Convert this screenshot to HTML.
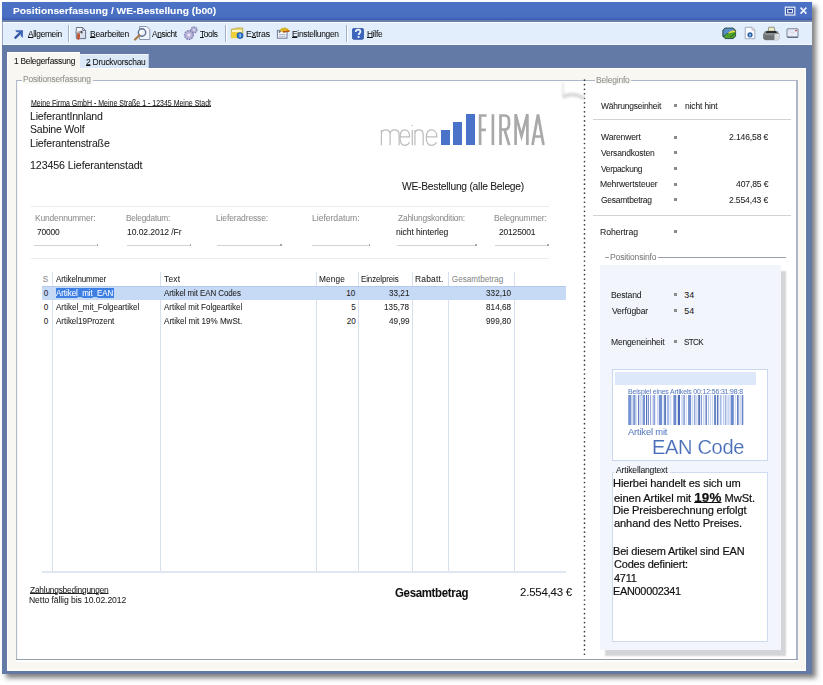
<!DOCTYPE html>
<html><head><meta charset="utf-8"><title>Positionserfassung</title>
<style>
html,body{margin:0;padding:0;}
body{width:823px;height:685px;position:relative;overflow:hidden;background:#fff;font-family:"Liberation Sans",sans-serif;}
body>div{position:absolute;}
.t{white-space:pre;transform-origin:0 0;-webkit-text-stroke:0.05px currentColor;}
u{text-decoration-thickness:1px;text-underline-offset:0px;}
</style></head><body>
<div style="left:2px;top:2px;width:810px;height:672px;background:#6379a6;box-shadow:4px 4px 5px rgba(0,0,0,0.5);"></div>
<div style="left:2px;top:2px;width:810px;height:17px;background:linear-gradient(#4b72c4,#4a6fc2 85%,#3f62b9);"></div>
<div style="left:2px;top:19px;width:810px;height:1px;background:#3d5cb0;"></div>
<div style="left:2px;top:20px;width:810px;height:2px;background:#6a80ab;"></div>
<div class="t" style="left:12.50px;top:6.00px;font-size:9.63px;line-height:9.63px;color:#fff;font-weight:700;transform:scaleX(1.0644);">Positionserfassung / WE-Bestellung (b00)</div>
<svg style="position:absolute;left:784px;top:6px" width="12" height="10" viewBox="0 0 12 10"><rect x="1.4" y="1.2" width="9.4" height="7.8" fill="#2f4c9c" stroke="#dfe7f8" stroke-width="1.3"/><rect x="3.7" y="3.4" width="4.8" height="3.4" fill="#2a4590" stroke="#dfe7f8" stroke-width="1.2"/></svg>
<svg style="position:absolute;left:799px;top:6px" width="9" height="9" viewBox="0 0 9 9"><path d="M1.6 1.6L7.4 7.6M7.4 1.6L1.6 7.6" stroke="#f0f5fd" stroke-width="1.6"/></svg>
<div style="left:2px;top:22px;width:810px;height:23px;background:#e2eefb;border-top:1px solid #fafdff;border-bottom:1px solid #f4f9ff;box-sizing:border-box;"></div>
<div style="left:2px;top:22px;width:1px;height:23px;background:#9aaac8;"></div>
<div style="left:68px;top:25px;width:1px;height:17px;background:#9fb0c8;"></div>
<div style="left:69px;top:25px;width:1px;height:17px;background:#fff;"></div>
<div style="left:225px;top:25px;width:1px;height:17px;background:#9fb0c8;"></div>
<div style="left:226px;top:25px;width:1px;height:17px;background:#fff;"></div>
<div style="left:346px;top:25px;width:1px;height:17px;background:#9fb0c8;"></div>
<div style="left:347px;top:25px;width:1px;height:17px;background:#fff;"></div>
<div class="t" style="left:28.30px;top:30.00px;font-size:8.99px;line-height:8.99px;color:#111;font-weight:400;letter-spacing:-0.355px;transform:scaleX(0.9321);"><u>A</u>llgemein</div>
<div class="t" style="left:89.60px;top:30.00px;font-size:8.99px;line-height:8.99px;color:#111;font-weight:400;letter-spacing:-0.239px;transform:scaleX(0.9523);"><u>B</u>earbeiten</div>
<div class="t" style="left:151.50px;top:30.00px;font-size:8.99px;line-height:8.99px;color:#111;font-weight:400;letter-spacing:-0.405px;transform:scaleX(0.9250);">A<u>n</u>sicht</div>
<div class="t" style="left:200.00px;top:30.00px;font-size:8.99px;line-height:8.99px;color:#111;font-weight:400;letter-spacing:-0.404px;transform:scaleX(0.9286);"><u>T</u>ools</div>
<div class="t" style="left:245.83px;top:30.00px;font-size:8.99px;line-height:8.99px;color:#111;font-weight:400;letter-spacing:-0.123px;transform:scaleX(0.9750);">E<u>x</u>tras</div>
<div class="t" style="left:292.00px;top:30.00px;font-size:8.99px;line-height:8.99px;color:#111;font-weight:400;letter-spacing:-0.312px;transform:scaleX(0.9352);"><u>E</u>instellungen</div>
<div class="t" style="left:367.40px;top:30.00px;font-size:8.99px;line-height:8.99px;color:#111;font-weight:400;letter-spacing:-0.321px;transform:scaleX(0.9333);"><u>H</u>ilfe</div>
<svg style="position:absolute;left:10px;top:26px" width="18" height="16" viewBox="0 0 18 16"><path d="M5.6 11.6L11.2 6" stroke="#34589f" stroke-width="2.4" stroke-linecap="square"/><path d="M5.2 4.2H12.9V11.7L10.8 10.2V6.3H6.6Z" fill="#4064b8"/></svg>
<svg style="position:absolute;left:70px;top:24px" width="20" height="18" viewBox="0 0 20 18"><defs><linearGradient id="dg" x1="0" y1="0" x2="1" y2="1"><stop offset="0" stop-color="#ffffff"/><stop offset="1" stop-color="#c9d3e6"/></linearGradient></defs><path d="M6.3 3.5H12.6L15.6 6.5V14.6H6.3Z" fill="url(#dg)" stroke="#5c6780" stroke-width="0.9"/><path d="M12.6 3.5V6.5H15.6" fill="none" stroke="#5c6780" stroke-width="0.8"/><rect x="5" y="7" width="7" height="2.2" rx="1" fill="#8d929c"/><rect x="5.6" y="7.4" width="4" height="0.9" fill="#e8e8e8"/><path d="M11.2 7.2C12 7.6 12.2 8.6 11.6 9.4" stroke="#2b2b2b" stroke-width="1.2" fill="none"/><path d="M7.2 9.2H10V12.5C10 14.8 9 16 8.3 16C7.5 16 6.8 14.8 6.8 12.5Z" fill="#c4573a"/></svg>
<svg style="position:absolute;left:132px;top:24px" width="20" height="18" viewBox="0 0 20 18"><path d="M7.6 2.5H14.8L17.8 5.5V15.5H7.6Z" fill="#f2f5fb" stroke="#7f8ca6" stroke-width="0.9"/><circle cx="10" cy="8.5" r="3.7" fill="#eef3fb" stroke="#5f7090" stroke-width="1.4"/><circle cx="9.2" cy="7.6" r="1.3" fill="#fff"/><path d="M7.4 11.2L3 15.5" stroke="#a77b4a" stroke-width="2.3" stroke-linecap="round"/></svg>
<svg style="position:absolute;left:182px;top:25px" width="16" height="16" viewBox="0 0 16 16"><circle cx="11.9" cy="5" r="3.1" fill="#b3b1d6" stroke="#7d7bab" stroke-width="1.2" stroke-dasharray="1.4 0.9"/><circle cx="11.9" cy="5" r="1" fill="#e2e2f2"/><circle cx="6.9" cy="10" r="4.4" fill="#b6b4d8" stroke="#7f7dad" stroke-width="1.3" stroke-dasharray="1.6 1"/><circle cx="6.9" cy="10" r="1.4" fill="#eceaf6"/></svg>
<svg style="position:absolute;left:226px;top:24px" width="20" height="18" viewBox="0 0 20 18"><path d="M5.3 5H9L10 4H16.8V13.5H5.3Z" fill="#e9d46a" stroke="#b9a24a" stroke-width="0.8"/><path d="M6 6H15.8V9H6Z" fill="#fdf6c0"/><path d="M5.3 8H16.8V14.2H5.3Z" fill="#f0cf3a"/><circle cx="14" cy="11.6" r="3.3" fill="#1f5fb8"/><circle cx="14" cy="11.6" r="2.4" fill="#2f78d0"/><rect x="13.6" y="9.8" width="1" height="3.4" fill="#bfe6ff"/></svg>
<svg style="position:absolute;left:272px;top:24px" width="20" height="18" viewBox="0 0 20 18"><rect x="5.4" y="6.4" width="9.6" height="7.8" fill="#f4f6fb" stroke="#6f7b98" stroke-width="1"/><path d="M7 10.5H13.5M7 12.3H13.5" stroke="#a8b2c8" stroke-width="0.9"/><path d="M7.5 6.8C9 3.5 12 3 14.5 4C16 4.6 17 6 17.6 7.2L11 8.2Z" fill="#d8b62a"/><path d="M11 8L17.5 7" stroke="#b8561a" stroke-width="1.3"/><path d="M6.8 8.3L8.6 7.6" stroke="#222" stroke-width="1.1"/></svg>
<svg style="position:absolute;left:352px;top:27.5px" width="12" height="12" viewBox="0 0 12 12"><rect x="0.4" y="0.4" width="11.2" height="10.9" rx="1.6" fill="#3b64bf" stroke="#2d4fa0" stroke-width="0.8"/><path d="M3.7 3.9C3.7 2.4 4.8 1.7 6 1.7C7.3 1.7 8.4 2.5 8.4 3.8C8.4 5.3 6.6 5.5 6.6 7" fill="none" stroke="#f4f8ff" stroke-width="1.7"/><rect x="5.6" y="8.1" width="1.9" height="1.8" fill="#f4f8ff"/></svg>
<svg style="position:absolute;left:722px;top:27px" width="15" height="13" viewBox="0 0 15 13"><path d="M3 1H11L13.6 3.2V9L11.2 11.6H3.2L0.8 9.2V3.4Z" fill="#2a5d3a" stroke="#1f3b44" stroke-width="0.8"/><path d="M1.4 3.6L3.3 1.6H10.6L12.6 3.2C9 3.8 4.5 6 1.6 9Z" fill="#5b8fcc"/><path d="M2 9.6C5 6.5 9.5 4.6 13.2 4.6V8.8L11 11H3.4Z" fill="#4fa22a"/><path d="M6.5 5.2C8.5 3.9 11 3.3 13.2 3.5V5.2C11 5.1 8.6 5.7 6.5 6.6Z" fill="#e8e04a"/><path d="M8 10C10 9 12 7.5 13 6" stroke="#1f5a1e" stroke-width="0.8" fill="none"/></svg>
<svg style="position:absolute;left:744px;top:26px" width="12" height="14" viewBox="0 0 12 14"><path d="M1.2 1.3H8L10.8 4.1V12.7H1.2Z" fill="#fbfcfe" stroke="#9aa4b8" stroke-width="0.9"/><path d="M8 1.3V4.1H10.8" fill="none" stroke="#c4a0b8" stroke-width="0.8"/><circle cx="6" cy="8.8" r="2.6" fill="#2a63aa"/><rect x="5.5" y="7.9" width="1" height="2.4" fill="#e8f2ff"/></svg>
<svg style="position:absolute;left:762px;top:26px" width="19" height="15" viewBox="0 0 19 15"><path d="M6.8 1.2H12.2L13 5.2H6Z" fill="#ecebc0" stroke="#707268" stroke-width="0.7"/><path d="M2.8 5H15.5L17.4 8V12.5L15.8 14.2H3.2L1.2 12.5V8Z" fill="#8c9092"/><path d="M4.8 5H13.8L15 7H3.6Z" fill="#2c2e30"/><path d="M1.4 8H12.5V12.3C12.5 13.3 12 14 11 14H3.2L1.4 12.6Z" fill="#6d7174"/><path d="M12.5 8H17.2V12.5L15.7 14H12.5Z" fill="#d9dbdc"/><path d="M2.5 8.8H11.5" stroke="#9ca0a3" stroke-width="0.8"/></svg>
<svg style="position:absolute;left:786px;top:28px" width="13" height="10" viewBox="0 0 13 10"><rect x="1" y="0.8" width="11" height="8.4" rx="0.5" fill="#e9edf8" stroke="#6c7894" stroke-width="0.9"/><path d="M1.2 9.2H12" stroke="#4d5870" stroke-width="1"/><path d="M2 2L6.5 5.3L11 2" fill="none" stroke="#c8cfe0" stroke-width="0.7"/><rect x="9.3" y="1.8" width="1.6" height="1.4" fill="#c44"/></svg>
<div style="left:7px;top:68px;width:799px;height:603px;background:#f8f7f1;border-top:1px solid #fff;border-left:1px solid #fff;border-right:1px solid #fff;box-sizing:border-box;"></div>
<div style="left:7px;top:669px;width:799px;height:2px;background:#fbfcfe;"></div>
<div style="left:7px;top:52px;width:73px;height:17px;background:#f8f7f1;border-top:1px solid #fff;border-left:1px solid #fff;box-sizing:border-box;"></div>
<div class="t" style="left:13.66px;top:57.00px;font-size:8.88px;line-height:8.88px;color:#111;font-weight:400;letter-spacing:-0.268px;transform:scaleX(0.9441);">1 Belegerfassung</div>
<div style="left:80px;top:54px;width:69px;height:14px;background:#dbe8f8;border-top:1px solid #eef5fd;border-right:1px solid #b9c8de;box-sizing:border-box;"></div>
<div class="t" style="left:85.70px;top:58.00px;font-size:8.88px;line-height:8.88px;color:#111;font-weight:400;letter-spacing:-0.256px;transform:scaleX(0.9485);"><u>2</u> Druckvorschau</div>
<div style="left:16px;top:79.5px;width:782px;height:1.5px;background:#adb5c8;"></div>
<div style="left:16.2px;top:79.5px;width:1.3px;height:580.5px;background:#b3bbcb;"></div>
<div style="left:796.3px;top:79.5px;width:1.5px;height:580.5px;background:#adb5c8;"></div>
<div style="left:16px;top:659px;width:782px;height:1px;background:#979fae;"></div>
<div style="left:16px;top:660px;width:782px;height:1.5px;background:#fff;"></div>
<div style="left:17.5px;top:81px;width:778.8px;height:577.8px;background:#fff;"></div>
<div style="left:22px;top:74px;width:71px;height:10px;background:#f8f7f1;"></div>
<div class="t" style="left:23.05px;top:75.00px;font-size:8.88px;line-height:8.88px;color:#8e8e8e;font-weight:400;letter-spacing:-0.216px;transform:scaleX(0.9527);">Positionserfassung</div>
<div style="left:595px;top:74px;width:36px;height:10px;background:#f8f7f1;"></div>
<div class="t" style="left:595.84px;top:76.00px;font-size:8.88px;line-height:8.88px;color:#8e8e8e;font-weight:400;letter-spacing:-0.209px;transform:scaleX(0.9556);">Beleginfo</div>
<svg style="position:absolute;left:583px;top:79.4px" width="3" height="580" fill="#3c3c3c"><circle cx="1.5" cy="1.20" r="0.85"/><circle cx="1.5" cy="5.72" r="0.85"/><circle cx="1.5" cy="10.24" r="0.85"/><circle cx="1.5" cy="14.76" r="0.85"/><circle cx="1.5" cy="19.28" r="0.85"/><circle cx="1.5" cy="23.80" r="0.85"/><circle cx="1.5" cy="28.32" r="0.85"/><circle cx="1.5" cy="32.84" r="0.85"/><circle cx="1.5" cy="37.36" r="0.85"/><circle cx="1.5" cy="41.88" r="0.85"/><circle cx="1.5" cy="46.40" r="0.85"/><circle cx="1.5" cy="50.92" r="0.85"/><circle cx="1.5" cy="55.44" r="0.85"/><circle cx="1.5" cy="59.96" r="0.85"/><circle cx="1.5" cy="64.48" r="0.85"/><circle cx="1.5" cy="69.00" r="0.85"/><circle cx="1.5" cy="73.52" r="0.85"/><circle cx="1.5" cy="78.04" r="0.85"/><circle cx="1.5" cy="82.56" r="0.85"/><circle cx="1.5" cy="87.08" r="0.85"/><circle cx="1.5" cy="91.60" r="0.85"/><circle cx="1.5" cy="96.12" r="0.85"/><circle cx="1.5" cy="100.64" r="0.85"/><circle cx="1.5" cy="105.16" r="0.85"/><circle cx="1.5" cy="109.68" r="0.85"/><circle cx="1.5" cy="114.20" r="0.85"/><circle cx="1.5" cy="118.72" r="0.85"/><circle cx="1.5" cy="123.24" r="0.85"/><circle cx="1.5" cy="127.76" r="0.85"/><circle cx="1.5" cy="132.28" r="0.85"/><circle cx="1.5" cy="136.80" r="0.85"/><circle cx="1.5" cy="141.32" r="0.85"/><circle cx="1.5" cy="145.84" r="0.85"/><circle cx="1.5" cy="150.36" r="0.85"/><circle cx="1.5" cy="154.88" r="0.85"/><circle cx="1.5" cy="159.40" r="0.85"/><circle cx="1.5" cy="163.92" r="0.85"/><circle cx="1.5" cy="168.44" r="0.85"/><circle cx="1.5" cy="172.96" r="0.85"/><circle cx="1.5" cy="177.48" r="0.85"/><circle cx="1.5" cy="182.00" r="0.85"/><circle cx="1.5" cy="186.52" r="0.85"/><circle cx="1.5" cy="191.04" r="0.85"/><circle cx="1.5" cy="195.56" r="0.85"/><circle cx="1.5" cy="200.08" r="0.85"/><circle cx="1.5" cy="204.60" r="0.85"/><circle cx="1.5" cy="209.12" r="0.85"/><circle cx="1.5" cy="213.64" r="0.85"/><circle cx="1.5" cy="218.16" r="0.85"/><circle cx="1.5" cy="222.68" r="0.85"/><circle cx="1.5" cy="227.20" r="0.85"/><circle cx="1.5" cy="231.72" r="0.85"/><circle cx="1.5" cy="236.24" r="0.85"/><circle cx="1.5" cy="240.76" r="0.85"/><circle cx="1.5" cy="245.28" r="0.85"/><circle cx="1.5" cy="249.80" r="0.85"/><circle cx="1.5" cy="254.32" r="0.85"/><circle cx="1.5" cy="258.84" r="0.85"/><circle cx="1.5" cy="263.36" r="0.85"/><circle cx="1.5" cy="267.88" r="0.85"/><circle cx="1.5" cy="272.40" r="0.85"/><circle cx="1.5" cy="276.92" r="0.85"/><circle cx="1.5" cy="281.44" r="0.85"/><circle cx="1.5" cy="285.96" r="0.85"/><circle cx="1.5" cy="290.48" r="0.85"/><circle cx="1.5" cy="295.00" r="0.85"/><circle cx="1.5" cy="299.52" r="0.85"/><circle cx="1.5" cy="304.04" r="0.85"/><circle cx="1.5" cy="308.56" r="0.85"/><circle cx="1.5" cy="313.08" r="0.85"/><circle cx="1.5" cy="317.60" r="0.85"/><circle cx="1.5" cy="322.12" r="0.85"/><circle cx="1.5" cy="326.64" r="0.85"/><circle cx="1.5" cy="331.16" r="0.85"/><circle cx="1.5" cy="335.68" r="0.85"/><circle cx="1.5" cy="340.20" r="0.85"/><circle cx="1.5" cy="344.72" r="0.85"/><circle cx="1.5" cy="349.24" r="0.85"/><circle cx="1.5" cy="353.76" r="0.85"/><circle cx="1.5" cy="358.28" r="0.85"/><circle cx="1.5" cy="362.80" r="0.85"/><circle cx="1.5" cy="367.32" r="0.85"/><circle cx="1.5" cy="371.84" r="0.85"/><circle cx="1.5" cy="376.36" r="0.85"/><circle cx="1.5" cy="380.88" r="0.85"/><circle cx="1.5" cy="385.40" r="0.85"/><circle cx="1.5" cy="389.92" r="0.85"/><circle cx="1.5" cy="394.44" r="0.85"/><circle cx="1.5" cy="398.96" r="0.85"/><circle cx="1.5" cy="403.48" r="0.85"/><circle cx="1.5" cy="408.00" r="0.85"/><circle cx="1.5" cy="412.52" r="0.85"/><circle cx="1.5" cy="417.04" r="0.85"/><circle cx="1.5" cy="421.56" r="0.85"/><circle cx="1.5" cy="426.08" r="0.85"/><circle cx="1.5" cy="430.60" r="0.85"/><circle cx="1.5" cy="435.12" r="0.85"/><circle cx="1.5" cy="439.64" r="0.85"/><circle cx="1.5" cy="444.16" r="0.85"/><circle cx="1.5" cy="448.68" r="0.85"/><circle cx="1.5" cy="453.20" r="0.85"/><circle cx="1.5" cy="457.72" r="0.85"/><circle cx="1.5" cy="462.24" r="0.85"/><circle cx="1.5" cy="466.76" r="0.85"/><circle cx="1.5" cy="471.28" r="0.85"/><circle cx="1.5" cy="475.80" r="0.85"/><circle cx="1.5" cy="480.32" r="0.85"/><circle cx="1.5" cy="484.84" r="0.85"/><circle cx="1.5" cy="489.36" r="0.85"/><circle cx="1.5" cy="493.88" r="0.85"/><circle cx="1.5" cy="498.40" r="0.85"/><circle cx="1.5" cy="502.92" r="0.85"/><circle cx="1.5" cy="507.44" r="0.85"/><circle cx="1.5" cy="511.96" r="0.85"/><circle cx="1.5" cy="516.48" r="0.85"/><circle cx="1.5" cy="521.00" r="0.85"/><circle cx="1.5" cy="525.52" r="0.85"/><circle cx="1.5" cy="530.04" r="0.85"/><circle cx="1.5" cy="534.56" r="0.85"/><circle cx="1.5" cy="539.08" r="0.85"/><circle cx="1.5" cy="543.60" r="0.85"/><circle cx="1.5" cy="548.12" r="0.85"/><circle cx="1.5" cy="552.64" r="0.85"/><circle cx="1.5" cy="557.16" r="0.85"/><circle cx="1.5" cy="561.68" r="0.85"/><circle cx="1.5" cy="566.20" r="0.85"/><circle cx="1.5" cy="570.72" r="0.85"/><circle cx="1.5" cy="575.24" r="0.85"/></svg>
<svg style="position:absolute;left:558px;top:80px" width="27" height="24" viewBox="0 0 27 24"><defs><filter id="cb" x="-20%" y="-20%" width="140%" height="140%"><feGaussianBlur stdDeviation="0.9"/></filter></defs><g filter="url(#cb)"><path d="M5 2.5V17" stroke="#e8e8e8" stroke-width="2.2" fill="none"/><path d="M5 17.5C10 13.5 19 13.5 26 18.5" stroke="#d9d9d9" stroke-width="3.8" fill="none"/></g></svg>
<div class="t" style="left:31.10px;top:100.00px;font-size:8.13px;line-height:8.13px;color:#222;font-weight:400;transform:scaleX(0.8608);"><u>Meine Firma GmbH - Meine Straße 1 - 12345 Meine Stadt</u></div>
<div class="t" style="left:30.13px;top:111.00px;font-size:10.91px;line-height:10.91px;color:#1a1a1a;font-weight:400;letter-spacing:-0.183px;transform:scaleX(0.9656);">LieferantInnland</div>
<div class="t" style="left:30.13px;top:124.00px;font-size:10.91px;line-height:10.91px;color:#1a1a1a;font-weight:400;letter-spacing:-0.207px;transform:scaleX(0.9655);">Sabine Wolf</div>
<div class="t" style="left:30.13px;top:138.00px;font-size:10.91px;line-height:10.91px;color:#1a1a1a;font-weight:400;letter-spacing:-0.184px;transform:scaleX(0.9661);">Lieferantenstraße</div>
<div class="t" style="left:30.12px;top:160.00px;font-size:10.91px;line-height:10.91px;color:#1a1a1a;font-weight:400;letter-spacing:-0.118px;transform:scaleX(0.9782);">123456 Lieferantenstadt</div>
<svg style="position:absolute;left:378px;top:120px" width="62" height="28" viewBox="0 0 62 28" fill="none" stroke="#bdbdbd" stroke-width="1.25"><path d="M3.4 25.3V9.9M3.4 14C3.4 11.2 5.2 9.8 7.6 9.8C10.4 9.8 12.1 11.4 12.1 14.5V25.3M12.1 14.5C12.1 11.2 14 9.8 16.5 9.8C19.4 9.8 21.1 11.4 21.1 14.5V25.3"/><path d="M22 16.8H31.6C31.6 12.5 29.5 9.8 26.8 9.8C24 9.8 22 12.8 22 17.5C22 22.3 24 25.3 26.9 25.3C29 25.3 30.5 24.3 31.4 22.3"/><path d="M34.3 9.9V25.3"/><circle cx="34.3" cy="5.4" r="0.7" fill="#bdbdbd" stroke="none"/><path d="M36.9 25.3V9.9M36.9 14C36.9 11.3 38.6 9.8 41 9.8C43.6 9.8 45.2 11.3 45.2 14.5V25.3"/><path d="M48.3 16.8H58.8C58.8 12.5 56.5 9.8 53.5 9.8C50.4 9.8 48.3 12.8 48.3 17.5C48.3 22.3 50.4 25.3 53.6 25.3C55.8 25.3 57.5 24.3 58.5 22.3"/></svg>
<div style="left:441.3px;top:129.9px;width:8.6px;height:15.2px;background:#4a72c8;"></div>
<div style="left:453.3px;top:121.9px;width:8.6px;height:23.2px;background:#4a72c8;"></div>
<div style="left:466.2px;top:114.2px;width:8.6px;height:30.9px;background:#4a72c8;"></div>
<svg style="position:absolute;left:476px;top:112px" width="72" height="36" viewBox="0 0 72 36" fill="none" stroke="#a9a9a9" stroke-width="2.7"><path d="M4.1 33.1V3.5H10.6M4.1 17.8H9.9"/><path d="M16.9 2.2V33.1"/><path d="M24.5 33.1V3.5H28.5C31.5 3.5 33 5.5 33 9V12.5C33 16 31.5 17.5 28.5 17.5H24.5M28.5 17.5L33.2 33.1"/><path d="M39.6 33.1V2.2L45.5 24L51.4 2.2V33.1"/><path d="M56.5 33.1L62 2.5L67.5 33.1M58.2 24.5H65.8"/></svg>
<div class="t" style="left:401.50px;top:181.00px;font-size:10.81px;line-height:10.81px;color:#1a1a1a;font-weight:400;letter-spacing:-0.258px;transform:scaleX(0.9526);">WE-Bestellung (alle Belege)</div>
<div style="left:31px;top:206px;width:518px;height:1px;background:#ebebeb;"></div>
<div style="left:31px;top:257.5px;width:518px;height:1px;background:#ebebeb;"></div>
<div class="t" style="left:35.03px;top:214.00px;font-size:8.77px;line-height:8.77px;color:#8c8c8c;font-weight:400;letter-spacing:-0.181px;transform:scaleX(0.9667);">Kundennummer:</div>
<div style="left:33.6px;top:244.5px;width:64.4px;height:1px;background:#d2d2d2;"></div>
<div style="left:96.5px;top:244.2px;width:1.5px;height:1.4px;background:#a6a6a6;"></div>
<div class="t" style="left:126.05px;top:214.00px;font-size:8.77px;line-height:8.77px;color:#8c8c8c;font-weight:400;letter-spacing:-0.253px;transform:scaleX(0.9500);">Belegdatum:</div>
<div style="left:127px;top:244.5px;width:64.4px;height:1px;background:#d2d2d2;"></div>
<div style="left:189.9px;top:244.2px;width:1.5px;height:1.4px;background:#a6a6a6;"></div>
<div class="t" style="left:215.83px;top:214.00px;font-size:8.77px;line-height:8.77px;color:#8c8c8c;font-weight:400;letter-spacing:-0.131px;transform:scaleX(0.9694);">Lieferadresse:</div>
<div style="left:216.8px;top:244.5px;width:65.0px;height:1px;background:#d2d2d2;"></div>
<div style="left:280.3px;top:244.2px;width:1.5px;height:1.4px;background:#a6a6a6;"></div>
<div class="t" style="left:311.61px;top:214.00px;font-size:8.77px;line-height:8.77px;color:#8c8c8c;font-weight:400;letter-spacing:-0.051px;transform:scaleX(0.9883);">Lieferdatum:</div>
<div style="left:312px;top:244.5px;width:58px;height:1px;background:#d2d2d2;"></div>
<div style="left:368.5px;top:244.2px;width:1.5px;height:1.4px;background:#a6a6a6;"></div>
<div class="t" style="left:397.50px;top:214.00px;font-size:8.77px;line-height:8.77px;color:#8c8c8c;font-weight:400;letter-spacing:-0.200px;transform:scaleX(0.9555);">Zahlungskondition:</div>
<div style="left:397px;top:244.5px;width:79.69999999999999px;height:1px;background:#d2d2d2;"></div>
<div style="left:475.2px;top:244.2px;width:1.5px;height:1.4px;background:#a6a6a6;"></div>
<div class="t" style="left:494.24px;top:214.00px;font-size:8.77px;line-height:8.77px;color:#8c8c8c;font-weight:400;letter-spacing:-0.198px;transform:scaleX(0.9618);">Belegnummer:</div>
<div style="left:495px;top:244.5px;width:53.799999999999955px;height:1px;background:#d2d2d2;"></div>
<div style="left:547.3px;top:244.2px;width:1.5px;height:1.4px;background:#a6a6a6;"></div>
<div class="t" style="left:36.50px;top:228.00px;font-size:8.77px;line-height:8.77px;color:#1a1a1a;font-weight:400;letter-spacing:-0.220px;transform:scaleX(0.9646);">70000</div>
<div class="t" style="left:126.52px;top:228.00px;font-size:8.77px;line-height:8.77px;color:#1a1a1a;font-weight:400;letter-spacing:-0.094px;transform:scaleX(0.9786);">10.02.2012 /Fr</div>
<div class="t" style="left:395.70px;top:228.00px;font-size:8.77px;line-height:8.77px;color:#1a1a1a;font-weight:400;letter-spacing:-0.080px;transform:scaleX(0.9796);">nicht hinterleg</div>
<div class="t" style="left:498.50px;top:228.00px;font-size:8.77px;line-height:8.77px;color:#1a1a1a;font-weight:400;letter-spacing:-0.184px;transform:scaleX(0.9679);">20125001</div>
<div style="left:52px;top:272px;width:1px;height:300px;background:#d6e0ef;"></div>
<div style="left:160px;top:272px;width:1px;height:300px;background:#d6e0ef;"></div>
<div style="left:316px;top:272px;width:1px;height:300px;background:#d6e0ef;"></div>
<div style="left:358px;top:272px;width:1px;height:300px;background:#d6e0ef;"></div>
<div style="left:412px;top:272px;width:1px;height:300px;background:#d6e0ef;"></div>
<div style="left:448px;top:272px;width:1px;height:300px;background:#d6e0ef;"></div>
<div style="left:514px;top:272px;width:1px;height:300px;background:#d6e0ef;"></div>
<div style="left:42px;top:571px;width:524px;height:2px;background:#dfe7f3;"></div>
<div style="left:42.2px;top:286px;width:523.4px;height:13.6px;background:#c6d9f5;border-top:1px solid #b4c9ec;box-sizing:border-box;"></div>
<div style="left:56px;top:288px;width:58px;height:9.8px;background:#3d7fe2;"></div>
<div class="t" style="left:42.70px;top:276.00px;font-size:8.13px;line-height:8.13px;color:#8a8a8a;font-weight:400;">S</div>
<div class="t" style="left:56.00px;top:276.00px;font-size:8.13px;line-height:8.13px;color:#222;font-weight:400;letter-spacing:-0.094px;transform:scaleX(0.9788);">Artikelnummer</div>
<div class="t" style="left:164.30px;top:276.00px;font-size:8.13px;line-height:8.13px;color:#222;font-weight:400;letter-spacing:0.177px;transform:scaleX(1.0367);">Text</div>
<div class="t" style="left:318.88px;top:276.00px;font-size:8.13px;line-height:8.13px;color:#222;font-weight:400;letter-spacing:0.122px;transform:scaleX(1.0217);">Menge</div>
<div class="t" style="left:360.83px;top:276.00px;font-size:8.13px;line-height:8.13px;color:#222;font-weight:400;letter-spacing:-0.103px;transform:scaleX(0.9744);">Einzelpreis</div>
<div class="t" style="left:414.76px;top:276.00px;font-size:8.13px;line-height:8.13px;color:#222;font-weight:400;letter-spacing:0.176px;transform:scaleX(1.0440);">Rabatt.</div>
<div class="t" style="left:451.80px;top:276.00px;font-size:8.13px;line-height:8.13px;color:#8a8a8a;font-weight:400;letter-spacing:0.009px;">Gesamtbetrag</div>
<div class="t" style="left:43.80px;top:290.00px;font-size:8.13px;line-height:8.13px;color:#1c2640;font-weight:400;">0</div>
<div class="t" style="left:56.30px;top:290.00px;font-size:8.13px;line-height:8.13px;color:#fff;font-weight:400;letter-spacing:-0.065px;transform:scaleX(0.9847);">Artikel_mit_EAN</div>
<div class="t" style="left:164.30px;top:290.00px;font-size:8.13px;line-height:8.13px;color:#222;font-weight:400;letter-spacing:-0.089px;transform:scaleX(0.9781);">Artikel mit EAN Codes</div>
<div class="t" style="left:346.15px;top:290.00px;font-size:8.13px;line-height:8.13px;color:#222;font-weight:400;">10</div>
<div class="t" style="left:389.10px;top:290.00px;font-size:8.13px;line-height:8.13px;color:#222;font-weight:400;letter-spacing:0.012px;transform:scaleX(1.0025);">33,21</div>
<div class="t" style="left:485.90px;top:290.00px;font-size:8.13px;line-height:8.13px;color:#222;font-weight:400;letter-spacing:0.030px;transform:scaleX(1.0060);">332,10</div>
<div class="t" style="left:43.80px;top:304.00px;font-size:8.13px;line-height:8.13px;color:#222;font-weight:400;">0</div>
<div class="t" style="left:56.30px;top:304.00px;font-size:8.13px;line-height:8.13px;color:#222;font-weight:400;letter-spacing:-0.026px;transform:scaleX(0.9929);">Artikel_mit_Folgeartikel</div>
<div class="t" style="left:164.30px;top:304.00px;font-size:8.13px;line-height:8.13px;color:#222;font-weight:400;letter-spacing:-0.037px;transform:scaleX(0.9894);">Artikel mit Folgeartikel</div>
<div class="t" style="left:351.30px;top:304.00px;font-size:8.13px;line-height:8.13px;color:#222;font-weight:400;">5</div>
<div class="t" style="left:383.89px;top:304.00px;font-size:8.13px;line-height:8.13px;color:#222;font-weight:400;letter-spacing:0.030px;transform:scaleX(1.0063);">135,78</div>
<div class="t" style="left:485.90px;top:304.00px;font-size:8.13px;line-height:8.13px;color:#222;font-weight:400;letter-spacing:0.030px;transform:scaleX(1.0060);">814,68</div>
<div class="t" style="left:43.80px;top:318.00px;font-size:8.13px;line-height:8.13px;color:#222;font-weight:400;">0</div>
<div class="t" style="left:56.30px;top:318.00px;font-size:8.13px;line-height:8.13px;color:#222;font-weight:400;letter-spacing:-0.044px;transform:scaleX(0.9892);">Artikel19Prozent</div>
<div class="t" style="left:164.30px;top:318.00px;font-size:8.13px;line-height:8.13px;color:#222;font-weight:400;letter-spacing:-0.018px;transform:scaleX(0.9956);">Artikel mit 19% MwSt.</div>
<div class="t" style="left:346.65px;top:318.00px;font-size:8.13px;line-height:8.13px;color:#222;font-weight:400;">20</div>
<div class="t" style="left:388.90px;top:318.00px;font-size:8.13px;line-height:8.13px;color:#222;font-weight:400;letter-spacing:0.037px;transform:scaleX(1.0075);">49,99</div>
<div class="t" style="left:485.90px;top:318.00px;font-size:8.13px;line-height:8.13px;color:#222;font-weight:400;letter-spacing:0.030px;transform:scaleX(1.0060);">999,80</div>
<div class="t" style="left:30.40px;top:586.00px;font-size:8.77px;line-height:8.77px;color:#222;font-weight:400;letter-spacing:-0.233px;transform:scaleX(0.9540);"><u>Zahlungsbedingungen</u></div>
<div class="t" style="left:29.42px;top:596.00px;font-size:8.77px;line-height:8.77px;color:#222;font-weight:400;letter-spacing:-0.080px;transform:scaleX(0.9795);">Netto fällig bis 10.02.2012</div>
<div class="t" style="left:394.70px;top:587.00px;font-size:11.98px;line-height:11.98px;color:#111;font-weight:700;letter-spacing:-0.333px;transform:scaleX(0.9563);">Gesamtbetrag</div>
<div class="t" style="left:519.60px;top:586.00px;font-size:11.77px;line-height:11.77px;color:#111;font-weight:400;letter-spacing:-0.195px;transform:scaleX(0.9691);">2.554,43 €</div>
<div class="t" style="left:600.50px;top:102.00px;font-size:8.88px;line-height:8.88px;color:#222;font-weight:400;letter-spacing:-0.236px;transform:scaleX(0.9530);">Währungseinheit</div>
<div style="left:674px;top:104px;width:3px;height:3px;background:#8a8a8a;"></div>
<div class="t" style="left:600.50px;top:133.00px;font-size:8.88px;line-height:8.88px;color:#222;font-weight:400;letter-spacing:-0.174px;transform:scaleX(0.9686);">Warenwert</div>
<div style="left:674px;top:136px;width:3px;height:3px;background:#8a8a8a;"></div>
<div class="t" style="left:600.50px;top:149.00px;font-size:8.88px;line-height:8.88px;color:#222;font-weight:400;letter-spacing:-0.218px;transform:scaleX(0.9569);">Versandkosten</div>
<div style="left:674px;top:151px;width:3px;height:3px;background:#8a8a8a;"></div>
<div class="t" style="left:600.50px;top:165.00px;font-size:8.88px;line-height:8.88px;color:#222;font-weight:400;letter-spacing:-0.318px;transform:scaleX(0.9426);">Verpackung</div>
<div style="left:674px;top:167px;width:3px;height:3px;background:#8a8a8a;"></div>
<div class="t" style="left:599.53px;top:180.00px;font-size:8.88px;line-height:8.88px;color:#222;font-weight:400;letter-spacing:-0.159px;transform:scaleX(0.9672);">Mehrwertsteuer</div>
<div style="left:674px;top:183px;width:3px;height:3px;background:#8a8a8a;"></div>
<div class="t" style="left:600.50px;top:196.00px;font-size:8.88px;line-height:8.88px;color:#222;font-weight:400;letter-spacing:-0.248px;transform:scaleX(0.9536);">Gesamtbetrag</div>
<div style="left:674px;top:198px;width:3px;height:3px;background:#8a8a8a;"></div>
<div class="t" style="left:599.52px;top:228.00px;font-size:8.88px;line-height:8.88px;color:#222;font-weight:400;letter-spacing:-0.089px;transform:scaleX(0.9816);">Rohertrag</div>
<div style="left:674px;top:230px;width:3px;height:3px;background:#8a8a8a;"></div>
<div class="t" style="left:684.50px;top:102.00px;font-size:8.88px;line-height:8.88px;color:#222;font-weight:400;letter-spacing:-0.168px;transform:scaleX(0.9597);">nicht hint</div>
<div class="t" style="left:728.50px;top:133.00px;font-size:8.88px;line-height:8.88px;color:#222;font-weight:400;letter-spacing:-0.149px;transform:scaleX(0.9690);">2.146,58 €</div>
<div class="t" style="left:736.00px;top:180.00px;font-size:8.88px;line-height:8.88px;color:#222;font-weight:400;letter-spacing:-0.147px;transform:scaleX(0.9706);">407,85 €</div>
<div class="t" style="left:728.70px;top:196.00px;font-size:8.88px;line-height:8.88px;color:#222;font-weight:400;letter-spacing:-0.155px;transform:scaleX(0.9679);">2.554,43 €</div>
<div style="left:593px;top:119px;width:198px;height:1px;background:#d2d2d2;"></div>
<div style="left:593px;top:215px;width:198px;height:1px;background:#d2d2d2;"></div>
<div style="left:605px;top:256.5px;width:181px;height:1px;background:#9aa0ab;"></div>
<div style="left:609px;top:252px;width:49px;height:9px;background:#fff;"></div>
<div class="t" style="left:610.24px;top:253.00px;font-size:8.88px;line-height:8.88px;color:#7c7c7c;font-weight:400;letter-spacing:-0.160px;transform:scaleX(0.9622);">Positionsinfo</div>
<div style="left:600.2px;top:265.3px;width:181px;height:384.5px;background:#f2f6fc;box-shadow:5px 6px 1.5px #d3d5d8;"></div>
<div class="t" style="left:611.33px;top:291.00px;font-size:8.88px;line-height:8.88px;color:#222;font-weight:400;letter-spacing:-0.163px;transform:scaleX(0.9694);">Bestand</div>
<div style="left:674px;top:293px;width:3px;height:3px;background:#8a8a8a;"></div>
<div class="t" style="left:684.25px;top:291.00px;font-size:8.88px;line-height:8.88px;color:#222;font-weight:400;">34</div>
<div class="t" style="left:612.30px;top:307.00px;font-size:8.88px;line-height:8.88px;color:#222;font-weight:400;letter-spacing:-0.148px;transform:scaleX(0.9697);">Verfügbar</div>
<div style="left:674px;top:309px;width:3px;height:3px;background:#8a8a8a;"></div>
<div class="t" style="left:684.25px;top:307.00px;font-size:8.88px;line-height:8.88px;color:#222;font-weight:400;">54</div>
<div class="t" style="left:611.34px;top:338.00px;font-size:8.88px;line-height:8.88px;color:#222;font-weight:400;letter-spacing:-0.195px;transform:scaleX(0.9605);">Mengeneinheit</div>
<div style="left:674px;top:340px;width:3px;height:3px;background:#8a8a8a;"></div>
<div class="t" style="left:683.99px;top:338.00px;font-size:8.88px;line-height:8.88px;color:#222;font-weight:400;letter-spacing:-0.713px;transform:scaleX(0.9114);">STCK</div>
<div style="left:612.2px;top:369.3px;width:156px;height:92px;background:#fff;border:1px solid #c9d8ef;box-sizing:border-box;"></div>
<div style="left:615.3px;top:372px;width:141px;height:12.8px;background:#dde9fb;"></div>
<div class="t" style="left:627.70px;top:388.00px;font-size:7.28px;line-height:7.28px;color:#5a7cc0;font-weight:400;letter-spacing:-0.157px;transform:scaleX(0.9539);">Beispiel eines Artikels 00:12:56:31:98:8</div>
<svg style="position:absolute;left:627.7px;top:395px" width="116" height="30"><rect x="0.20" y="0" width="3.2" height="30" fill="#7592d2"/><rect x="3.90" y="0" width="0.8" height="30" fill="#c5d3f0"/><rect x="5.20" y="0" width="2.3" height="30" fill="#7d98d2"/><rect x="7.90" y="0" width="0.9" height="30" fill="#d0dbf3"/><rect x="10.10" y="0" width="1.1" height="30" fill="#5370b8"/><rect x="11.80" y="0" width="1.2" height="30" fill="#c9d6f1"/><rect x="13.50" y="0" width="1.0" height="30" fill="#b9c9ec"/><rect x="14.80" y="0" width="2.2" height="30" fill="#7b96d3"/><rect x="18.10" y="0" width="1.1" height="30" fill="#3e5fb0"/><rect x="20.20" y="0" width="0.8" height="30" fill="#5b78bd"/><rect x="22.30" y="0" width="0.8" height="30" fill="#6f8ac8"/><rect x="24.30" y="0" width="0.8" height="30" fill="#cdd8f2"/><rect x="25.30" y="0" width="1.9" height="30" fill="#8aa2d8"/><rect x="29.10" y="0" width="1.0" height="30" fill="#c8d5f1"/><rect x="30.80" y="0" width="3.3" height="30" fill="#7391d1"/><rect x="34.90" y="0" width="0.8" height="30" fill="#c9d5f1"/><rect x="36.30" y="0" width="1.5" height="30" fill="#3d5fae"/><rect x="38.80" y="0" width="2.5" height="30" fill="#a9bde8"/><rect x="42.30" y="0" width="1.0" height="30" fill="#c3d1f0"/><rect x="45.40" y="0" width="2.9" height="30" fill="#6d8bcf"/><rect x="49.80" y="0" width="2.2" height="30" fill="#4d6cb9"/><rect x="53.30" y="0" width="1.4" height="30" fill="#c4d2f0"/><rect x="55.30" y="0" width="1.6" height="30" fill="#8aa1d8"/><rect x="57.80" y="0" width="0.8" height="30" fill="#c9d5f1"/><rect x="60.10" y="0" width="3.0" height="30" fill="#7190d0"/><rect x="64.20" y="0" width="1.0" height="30" fill="#c2d0ef"/><rect x="66.10" y="0" width="1.3" height="30" fill="#8ba2d6"/><rect x="68.30" y="0" width="1.2" height="30" fill="#c3d1f0"/><rect x="70.30" y="0" width="1.6" height="30" fill="#4666b5"/><rect x="72.80" y="0" width="0.9" height="30" fill="#5372bb"/><rect x="75.10" y="0" width="1.3" height="30" fill="#c6d3f0"/><rect x="77.50" y="0" width="1.3" height="30" fill="#5271bb"/><rect x="79.90" y="0" width="1.2" height="30" fill="#b5c6eb"/><rect x="81.90" y="0" width="1.0" height="30" fill="#c8d5f1"/><rect x="83.90" y="0" width="0.9" height="30" fill="#c3d0ef"/><rect x="86.10" y="0" width="2.0" height="30" fill="#6784c7"/><rect x="89.10" y="0" width="1.3" height="30" fill="#4a69b6"/><rect x="91.80" y="0" width="1.8" height="30" fill="#a8bbe6"/><rect x="94.90" y="0" width="1.5" height="30" fill="#c0cfee"/><rect x="97.30" y="0" width="1.0" height="30" fill="#7d95d0"/><rect x="99.30" y="0" width="2.4" height="30" fill="#c9d6f2"/><rect x="102.60" y="0" width="3.2" height="30" fill="#6b89cd"/><rect x="106.90" y="0" width="0.9" height="30" fill="#c8d4f0"/><rect x="109.10" y="0" width="1.5" height="30" fill="#5a77bc"/><rect x="111.50" y="0" width="1.2" height="30" fill="#c0ceee"/><rect x="113.70" y="0" width="1.6" height="30" fill="#6a86c8"/></svg>
<div class="t" style="left:627.70px;top:427.00px;font-size:9.84px;line-height:9.84px;color:#5a7cc0;font-weight:400;letter-spacing:-0.193px;transform:scaleX(0.9570);">Artikel mit</div>
<div class="t" style="left:652.25px;top:437.00px;font-size:20.6px;line-height:20.6px;color:#4a6fb8;font-weight:400;letter-spacing:-0.352px;transform:scaleX(0.9745);-webkit-text-stroke:0.15px #fff;">EAN Code</div>
<div style="left:612px;top:471.5px;width:156px;height:170.5px;background:#fff;border:1px solid #cfdcf0;box-sizing:border-box;"></div>
<div style="left:614px;top:467px;width:56px;height:6px;background:#f1f5fb;"></div>
<div class="t" style="left:615.70px;top:466.00px;font-size:8.99px;line-height:8.99px;color:#222;font-weight:400;letter-spacing:-0.183px;transform:scaleX(0.9570);">Artikellangtext</div>
<div class="t" style="left:613.42px;top:478.00px;font-size:11.34px;line-height:11.34px;color:#111;font-weight:400;letter-spacing:-0.117px;transform:scaleX(0.9784);-webkit-text-stroke:0.2px #111;">Hierbei handelt es sich um</div>
<div class="t" style="left:614.40px;top:492.00px;font-size:11.34px;line-height:11.34px;color:#111;font-weight:400;letter-spacing:-0.092px;transform:scaleX(0.9838);-webkit-text-stroke:0.2px #111;">einen Artikel mit <b style="font-size:1.2em;letter-spacing:0.2px"><u>19%</u></b> MwSt.</div>
<div class="t" style="left:613.42px;top:505.00px;font-size:11.34px;line-height:11.34px;color:#111;font-weight:400;letter-spacing:-0.136px;transform:scaleX(0.9752);-webkit-text-stroke:0.2px #111;">Die Preisberechnung erfolgt</div>
<div class="t" style="left:614.40px;top:518.00px;font-size:11.34px;line-height:11.34px;color:#111;font-weight:400;letter-spacing:-0.115px;transform:scaleX(0.9797);-webkit-text-stroke:0.2px #111;">anhand des Netto Preises.</div>
<div class="t" style="left:613.43px;top:546.00px;font-size:11.34px;line-height:11.34px;color:#111;font-weight:400;letter-spacing:-0.173px;transform:scaleX(0.9687);-webkit-text-stroke:0.2px #111;">Bei diesem Artikel sind EAN</div>
<div class="t" style="left:614.40px;top:559.00px;font-size:11.34px;line-height:11.34px;color:#111;font-weight:400;letter-spacing:-0.179px;transform:scaleX(0.9671);-webkit-text-stroke:0.2px #111;">Codes definiert:</div>
<div class="t" style="left:614.40px;top:573.00px;font-size:11.34px;line-height:11.34px;color:#111;font-weight:400;letter-spacing:-0.276px;transform:scaleX(0.9667);-webkit-text-stroke:0.2px #111;">4711</div>
<div class="t" style="left:613.44px;top:586.00px;font-size:11.34px;line-height:11.34px;color:#111;font-weight:400;letter-spacing:-0.286px;transform:scaleX(0.9618);-webkit-text-stroke:0.2px #111;">EAN00002341</div>
</body></html>
